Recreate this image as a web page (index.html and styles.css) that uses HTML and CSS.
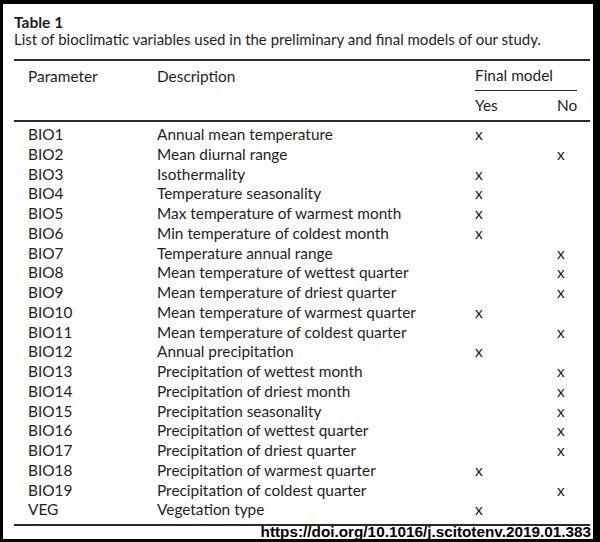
FILE: index.html
```html
<!DOCTYPE html>
<html lang="en">

<head>
    <meta charset="UTF-8">
    <meta name="viewport" content="width=device-width, initial-scale=1.0">
    <title>Table 1</title>
    <link rel="stylesheet" href="styles.css">
</head>

<body>
    <div class="frame">
        <h1 class="title">Table 1</h1>
        <p class="caption">List of bioclimatic variables used in the preliminary and final models of our study.</p>

        <table class="bio">
            <thead>
                <tr class="head-top">
                    <th class="col-param" rowspan="2">Parameter</th>
                    <th class="col-desc" rowspan="2">Description</th>
                    <th class="group" colspan="2"><div>Final model</div></th>
                </tr>
                <tr class="head-sub">
                    <th class="col-yes">Yes</th>
                    <th class="col-no">No</th>
                </tr>
            </thead>
            <tbody>
                <tr><td class="col-param">BIO1</td><td>Annual mean temperature</td><td>x</td><td></td></tr>
                <tr><td class="col-param">BIO2</td><td>Mean diurnal range</td><td></td><td>x</td></tr>
                <tr><td class="col-param">BIO3</td><td>Isothermality</td><td>x</td><td></td></tr>
                <tr><td class="col-param">BIO4</td><td>Temperature seasonality</td><td>x</td><td></td></tr>
                <tr><td class="col-param">BIO5</td><td>Max temperature of warmest month</td><td>x</td><td></td></tr>
                <tr><td class="col-param">BIO6</td><td>Min temperature of coldest month</td><td>x</td><td></td></tr>
                <tr><td class="col-param">BIO7</td><td>Temperature annual range</td><td></td><td>x</td></tr>
                <tr><td class="col-param">BIO8</td><td>Mean temperature of wettest quarter</td><td></td><td>x</td></tr>
                <tr><td class="col-param">BIO9</td><td>Mean temperature of driest quarter</td><td></td><td>x</td></tr>
                <tr><td class="col-param">BIO10</td><td>Mean temperature of warmest quarter</td><td>x</td><td></td></tr>
                <tr><td class="col-param">BIO11</td><td>Mean temperature of coldest quarter</td><td></td><td>x</td></tr>
                <tr><td class="col-param">BIO12</td><td>Annual precipitation</td><td>x</td><td></td></tr>
                <tr><td class="col-param">BIO13</td><td>Precipitation of wettest month</td><td></td><td>x</td></tr>
                <tr><td class="col-param">BIO14</td><td>Precipitation of driest month</td><td></td><td>x</td></tr>
                <tr><td class="col-param">BIO15</td><td>Precipitation seasonality</td><td></td><td>x</td></tr>
                <tr><td class="col-param">BIO16</td><td>Precipitation of wettest quarter</td><td></td><td>x</td></tr>
                <tr><td class="col-param">BIO17</td><td>Precipitation of driest quarter</td><td></td><td>x</td></tr>
                <tr><td class="col-param">BIO18</td><td>Precipitation of warmest quarter</td><td>x</td><td></td></tr>
                <tr><td class="col-param">BIO19</td><td>Precipitation of coldest quarter</td><td></td><td>x</td></tr>
                <tr><td class="col-param">VEG</td><td>Vegetation type</td><td>x</td><td></td></tr>
            </tbody>
        </table>

        <p class="doi">https://doi.org/10.1016/j.scitotenv.2019.01.383</p>
    </div>
</body>

</html>
```

FILE: styles.css
```css
body {
    margin: 0;
    background-color: #fff;
    font-family: Lato, "Open Sans", sans-serif;
    color: #1e1e1e;
}

/*resmin etrafindaki siyah cerceve*/
.frame {
    box-sizing: border-box;
    width: 600px;
    height: 542px;
    border-style: solid;
    border-color: #000;
    border-width: 4px 7px 3px 3px;
    padding: 0 0 0 11px;
}

.title {
    margin: 0;
    padding-top: 9px;
    font-size: 15.5px;
    line-height: 18px;
    font-weight: bold;
}

.caption {
    margin: 0;
    font-size: 15px;
    line-height: 16px;
}

.bio {
    width: 576px;
    margin-top: 12px;
    border-collapse: collapse;
    font-size: 15.4px;
    border-top: 2px solid #2a2a2a;
    border-bottom: 2px solid #2a2a2a;
}

.bio th {
    font-weight: normal;
    text-align: left;
    vertical-align: top;
    padding: 0;
}

.bio td {
    padding: 0;
    height: 19.75px;
    line-height: 19.75px;
}

.bio .col-param {
    width: 129px;
    padding-left: 14px;
    vertical-align: top;
}

.head-top th {
    height: 30px;
    line-height: 30px;
}

.head-sub th {
    height: 29px;
    line-height: 29px;
}

thead {
    border-bottom: 2px solid #2a2a2a;
}

.col-desc {
    width: 318px;
}

.col-yes {
    width: 82px;
}

/*Final model alt cizgisi*/
.bio .group {
    vertical-align: bottom;
}

.group div {
    margin-right: 13px;
    border-bottom: 1px solid #2a2a2a;
    line-height: 29px;
}

/*ilk ve son sira icin bosluk*/
tbody tr:first-child td {
    padding-top: 3px;
}

tbody tr:last-child td {
    padding-bottom: 4px;
}

.doi {
    margin: -1px 0 0;
    padding-right: 2px;
    text-align: right;
    font-family: "Liberation Sans", Arial, sans-serif;
    font-weight: bold;
    font-size: 15.3px;
    line-height: 14px;
    color: #000;
}
```
